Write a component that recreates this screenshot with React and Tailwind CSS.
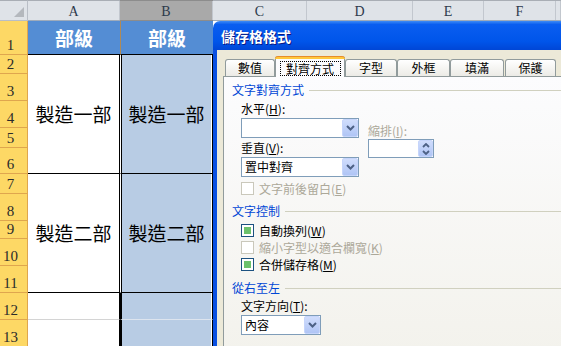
import React from 'react';

const sans = "font-['Noto_Sans_CJK_TC','Noto_Sans_CJK_SC',sans-serif]";
const serif = "font-['Liberation_Serif','Noto_Sans_CJK_TC',serif]";

const rowStarts = [
  'row-start-2', 'row-start-3', 'row-start-4', 'row-start-5', 'row-start-6', 'row-start-7', 'row-start-8',
  'row-start-9', 'row-start-10', 'row-start-11', 'row-start-12', 'row-start-13', 'row-start-14',
];

const RowHeader = ({ n }) => (
  <div className={`col-start-1 ${rowStarts[n - 1]} flex items-end justify-center pr-[6px] pb-px bg-[#fdd865] border-r border-b border-[#dfa64e] text-[15px] leading-[15px] text-[#2b2b2b] ${serif}`}>
    {n}
  </div>
);

const ColHeader = ({ label, w, dark }) => (
  <div className={`${w} flex items-center justify-center pt-[2px] border-r border-[#c2c7ce] text-[14px] text-[#2d3a4c] ${serif} ${dark ? 'bg-[#a9a9a9]' : ''}`}>
    {label}
  </div>
);

const Acc = ({ k }) => (
  <>
    (<span className="underline underline-offset-1">{k}</span>)
  </>
);

const DropBtn = () => (
  <div className="h-full w-[16px] rounded-[2px] border border-[#c6d5fb] bg-linear-to-b from-[#d0ddfc] to-[#b0c5f5] flex items-center justify-center">
    <svg width="9" height="6" viewBox="0 0 9 6">
      <path d="M1 1 L4.5 4.5 L8 1" fill="none" stroke="#4d6185" strokeWidth="2" />
    </svg>
  </div>
);

const Combo = ({ w, text }) => (
  <div className={`${w} h-[20px] border border-[#7f9db9] bg-white flex`}>
    <span className="flex-1 pl-[3px] leading-[18px]">{text}</span>
    <DropBtn />
  </div>
);

const Check = ({ on, disabled, children }) => (
  <div className="h-[17px] flex items-center pl-[17px]">
    <div className={`w-[13px] h-[13px] border flex items-center justify-center bg-white ${disabled ? 'border-[#cac8bb]' : 'border-[#1c5180]'}`}>
      {on && <div className="w-[7px] h-[7px] bg-[#6cc16c]" />}
    </div>
    <span className={`ml-[5px] leading-[14px] ${disabled ? 'text-[#aca899]' : 'text-black'}`}>{children}</span>
  </div>
);

const Group = ({ title, className }) => (
  <div className={`flex items-center pl-[8px] ${className}`}>
    <span className="text-[#0046d5] leading-[14px]">{title}</span>
    <div className="ml-[5px] flex-1 h-px bg-[#d0d0bf] mt-px" />
  </div>
);

const Tab = ({ label, w, active }) =>
  active ? (
    <div className={`relative z-10 -mb-px h-[21px] ${w} rounded-t-[3px] border-x border-[#919b9c] bg-[#fcfcfe] flex flex-col`}>
      <div className="-mx-px h-[3px] rounded-t-[3px] bg-[#ffc83c] border-t border-[#e68b2c]" />
      <div className="flex-1 flex items-center justify-center">
        <span className="w-[61px] h-[15px] border border-dotted border-black flex items-center justify-center leading-[13px]">{label}</span>
      </div>
    </div>
  ) : (
    <div className={`h-[17px] ${w} rounded-t-[3px] border border-b-0 border-[#919b9c] bg-linear-to-b from-white to-[#ecebe6] flex items-center justify-center leading-[14px]`}>
      {label}
    </div>
  );

const FormatDialog = () => (
  <div className={`absolute left-[213px] top-[21px] w-[360px] text-[12px] text-black ${sans}`}>
    <div className="h-[29px] rounded-t-[7px] bg-[linear-gradient(to_bottom,#3d8bf6_0%,#0a5ef0_12%,#0055ea_70%,#0046d6_100%)] flex items-center pl-[8px]">
      <span className="text-white font-bold text-[14px] leading-[16px] [text-shadow:1px_1px_#0a1883]">儲存格格式</span>
    </div>
    <div className="bg-[#ece9d8] border-l-4 border-[#0a50e2] pt-[6px] h-[300px]">
      <div className="h-[20px] flex items-end pl-[8px]">
        <Tab label="數值" w="w-[50px]" />
        <Tab label="對齊方式" w="w-[70px]" active />
        <Tab label="字型" w="w-[52px]" />
        <Tab label="外框" w="w-[53px]" />
        <Tab label="填滿" w="w-[54px]" />
        <div className="ml-px"><Tab label="保護" w="w-[51px]" /></div>
      </div>
      <div className="ml-[6px] h-[280px] border border-[#919b9c] bg-linear-to-b from-[#fcfcfe] to-[#f3f2ec] pt-[6px]">
        <Group title="文字對齊方式" />
        <div className="mt-[5px] flex pl-[17px]">
          <div className="w-[118px] flex flex-col">
            <span className="leading-[14px]">水平<Acc k="H" />:</span>
            <div className="mt-[2px]"><Combo w="w-[118px]" text="" /></div>
            <span className="mt-[3px] leading-[14px]">垂直<Acc k="V" />:</span>
            <div className="mt-[2px]"><Combo w="w-[118px]" text="置中對齊" /></div>
          </div>
          <div className="ml-[9px] flex flex-col">
            <span className="mt-[22px] leading-[14px] text-[#aca899]">縮排<Acc k="I" />:</span>
            <div className="mt-px w-[66px] h-[19px] border border-[#7f9db9] bg-white flex justify-end">
              <div className="h-full w-[15px] rounded-[2px] border border-[#c6d5fb] bg-linear-to-b from-[#d0ddfc] to-[#b0c5f5] flex flex-col items-center justify-center gap-[2px]">
                <svg width="8" height="5" viewBox="0 0 8 5"><path d="M1 4 L4 1 L7 4" fill="none" stroke="#4d6185" strokeWidth="1.8" /></svg>
                <svg width="8" height="5" viewBox="0 0 8 5"><path d="M1 1 L4 4 L7 1" fill="none" stroke="#4d6185" strokeWidth="1.8" /></svg>
              </div>
            </div>
          </div>
        </div>
        <div className="mt-[3px]">
          <Check disabled>文字前後留白<Acc k="E" /></Check>
        </div>
        <Group title="文字控制" className="mt-[7px]" />
        <div className="mt-[4px]">
          <Check on>自動換列<Acc k="W" /></Check>
          <Check disabled>縮小字型以適合欄寬<Acc k="K" /></Check>
          <Check on>合併儲存格<Acc k="M" /></Check>
        </div>
        <Group title="從右至左" className="mt-[8px]" />
        <div className="mt-[4px] pl-[17px] leading-[14px]">文字方向<Acc k="T" />:</div>
        <div className="mt-[2px] pl-[17px]"><Combo w="w-[80px]" text="內容" /></div>
      </div>
    </div>
  </div>
);

export default function App() {
  const bigText = `text-[19px] leading-[22px] ${sans}`;
  return (
    <div className="relative w-[561px] h-[346px] overflow-hidden bg-white">
      <div className="grid grid-cols-[28px_92px_93px_1fr] grid-rows-[21px_34px_19px_27px_27px_20px_26px_20px_27px_18px_27px_27px_27px_27px]">
        {/* column headers */}
        <div className="col-start-1 row-start-1 relative bg-[#dfe3e8] border-t border-t-[#a9aeb5] border-r border-b border-[#b9bec6]">
          <svg className="absolute right-[3px] bottom-[3px]" width="10" height="10" viewBox="0 0 10 10">
            <path d="M10 0 L10 10 L0 10 Z" fill="#b4b8bd" />
          </svg>
        </div>
        <div className="col-start-2 row-start-1 flex bg-[#dfe3e8] border-t border-t-[#a9aeb5] border-b border-[#9eabbb]">
          <ColHeader label="A" w="flex-1" />
        </div>
        <div className="col-start-3 row-start-1 flex bg-[#a9a9a9] border-t border-t-[#8c8c8c] border-b border-[#8c8c8c]">
          <ColHeader label="B" w="flex-1" dark />
        </div>
        <div className="col-start-4 row-start-1 flex bg-[#dfe3e8] border-t border-t-[#a9aeb5] border-b border-[#9eabbb]">
          <ColHeader label="C" w="w-[94px]" />
          <ColHeader label="D" w="w-[106px]" />
          <ColHeader label="E" w="w-[71px]" />
          <ColHeader label="F" w="w-[72px]" />
          <ColHeader label="" w="flex-1" />
        </div>

        {[1, 2, 3, 4, 5, 6, 7, 8, 9, 10, 11, 12, 13].map((n) => (
          <RowHeader key={n} n={n} />
        ))}

        {/* row 1 */}
        <div className="col-start-2 row-start-2 bg-[#548dd4] border-b border-black flex items-center justify-center">
          <span className={`text-white font-bold ${bigText}`}>部級</span>
        </div>
        <div className="col-start-3 row-start-2 bg-[#548dd4] border-b border-black border-l border-l-[#b08a56] flex items-center justify-center">
          <span className={`text-white font-bold ${bigText}`}>部級</span>
        </div>

        {/* merged blocks */}
        <div className="col-start-2 row-start-3 row-span-5 bg-white border-r border-b border-black flex items-center justify-center">
          <span className={bigText}>製造一部</span>
        </div>
        <div className="col-start-3 row-start-3 row-span-5 bg-[#b8cce4] border-b border-r border-black border-l border-l-white shadow-[inset_1px_0_0_#000,inset_-1px_0_0_#fff] flex items-center justify-center">
          <span className={bigText}>製造一部</span>
        </div>
        <div className="col-start-2 row-start-8 row-span-5 bg-white border-r border-b border-black flex items-center justify-center">
          <span className={bigText}>製造二部</span>
        </div>
        <div className="col-start-3 row-start-8 row-span-5 bg-[#b8cce4] border-b border-r border-black border-l border-l-white shadow-[inset_1px_0_0_#000,inset_-1px_0_0_#fff] flex items-center justify-center">
          <span className={bigText}>製造二部</span>
        </div>

        {/* rows 12-13 */}
        <div className="col-start-2 row-start-13 bg-white border-r border-r-black border-b border-b-[#d4d4d4]" />
        <div className="col-start-2 row-start-14 bg-white border-r border-r-black" />
        <div className="col-start-3 row-start-13 bg-[#b8cce4] border-l-2 border-l-black border-r border-r-black border-b border-b-[#dde4ee] shadow-[inset_-1px_0_0_#fff]" />
        <div className="col-start-3 row-start-14 bg-[#b8cce4] border-l-2 border-l-black border-r border-r-black shadow-[inset_-1px_0_0_#fff]" />

        <div className="col-start-4 row-start-2 row-span-13 bg-white" />
      </div>

      <FormatDialog />
    </div>
  );
}
